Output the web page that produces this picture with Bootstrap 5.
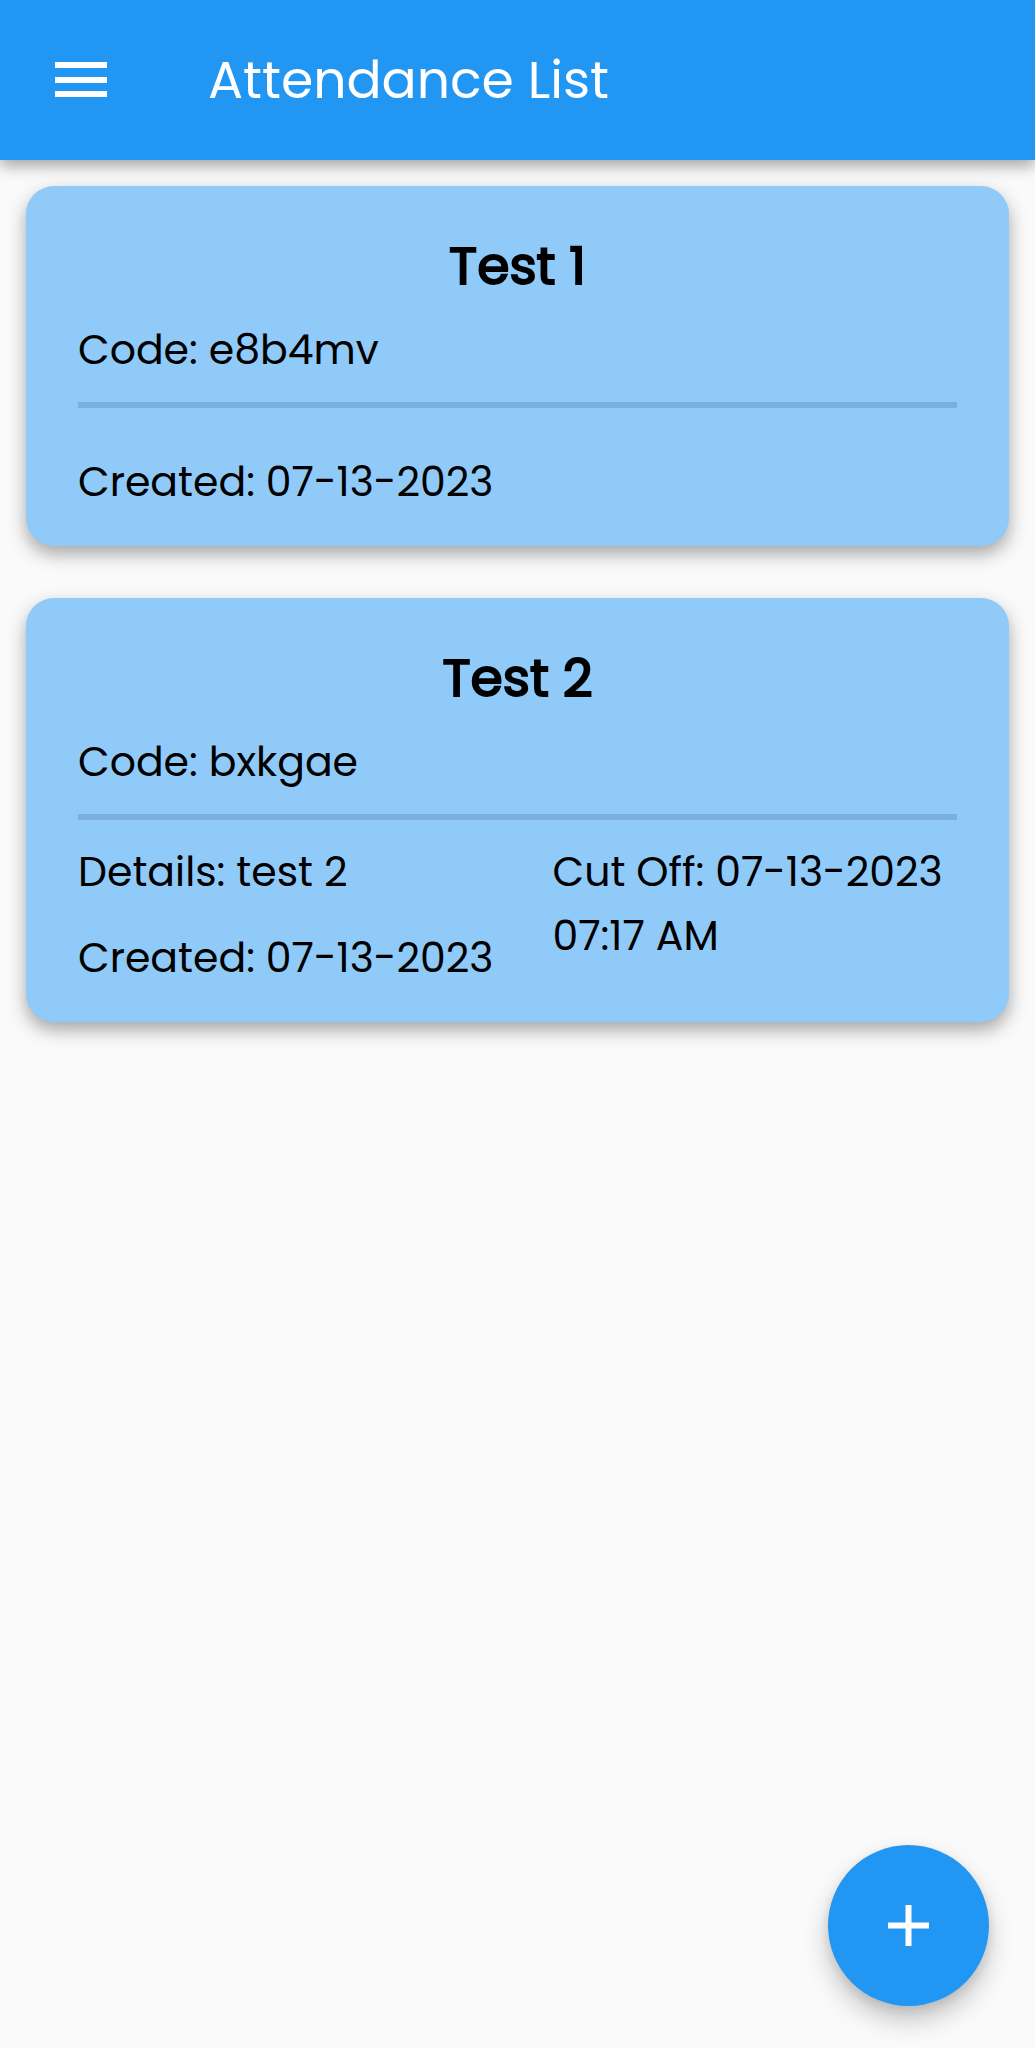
<!DOCTYPE html>
<html lang="en">
<head>
<meta charset="utf-8">
<meta name="viewport" content="width=device-width, initial-scale=1">
<title>Attendance List</title>
<link href="https://cdn.jsdelivr.net/npm/bootstrap@5.3.0/dist/css/bootstrap.min.css" rel="stylesheet">
<style>
  body { background: #fafafa; color: #000; font-family: Poppins, Inter, "Open Sans", sans-serif; font-size: 41px; line-height: 64px; }
  .app-bar { background: #2196f3; height: 160px; padding: 0 52px; gap: 98px; box-shadow: 0 6px 14px rgba(0,0,0,.34); }
  .app-title { font-size: 52px; line-height: 80px; color: #fff; }
  .icon-button { width: 58px; height: 58px; line-height: 0; color: #fff; }
  .session-list { padding: 26px; gap: 52px; }
  .session-card { background: #90caf9; border-radius: 28px; padding: 40px 52px 32px; box-shadow: 0 8px 18px rgba(0,0,0,.34); }
  .session-title { font-size: 52px; line-height: 80px; font-weight: 400; -webkit-text-stroke: 2px currentColor; margin-bottom: 12px; }
  .session-rule { height: 6px; margin: 20px 0; background: #7bafde; border: 0; opacity: 1; }
  .session-info { display: grid; grid-template-columns: 423fr 405fr; column-gap: 52px; }
  .info-stack { gap: 22px; }
  .fab { right: 46px; bottom: 42px; width: 161px; height: 161px; background: #2196f3; color: #fff; box-shadow: 0 14px 26px rgba(0,0,0,.22), 0 4px 12px rgba(0,0,0,.1); }
</style>
<script src="https://cdn.jsdelivr.net/npm/bootstrap@5.3.0/dist/js/bootstrap.bundle.min.js" defer></script>
</head>
<body>
<header class="app-bar d-flex align-items-center position-relative">
  <button type="button" class="icon-button btn p-0 border-0" aria-label="Open menu">
    <svg width="58" height="58" viewBox="0 0 58 58" fill="currentColor" aria-hidden="true"><path d="M3 11h52v6H3zM3 26h52v6H3zM3 40h52v6H3z"/></svg>
  </button>
  <h1 class="app-title fw-normal m-0">Attendance List</h1>
</header>
<main class="session-list d-flex flex-column">
  <article class="session-card">
    <h2 class="session-title text-center">Test 1</h2>
    <p class="m-0">Code: e8b4mv</p>
    <hr class="session-rule">
    <div class="session-info">
      <div class="info-stack d-flex flex-column">
        <div></div>
        <div class="text-nowrap">Created: 07-13-2023</div>
      </div>
    </div>
  </article>
  <article class="session-card">
    <h2 class="session-title text-center">Test 2</h2>
    <p class="m-0">Code: bxkgae</p>
    <hr class="session-rule">
    <div class="session-info">
      <div class="info-stack d-flex flex-column">
        <div>Details: test 2</div>
        <div class="text-nowrap">Created: 07-13-2023</div>
      </div>
      <div>Cut Off: 07-13-2023 07:17 AM</div>
    </div>
  </article>
</main>
<button type="button" class="fab btn rounded-circle border-0 p-0 position-fixed d-flex align-items-center justify-content-center" aria-label="Add attendance">
  <svg width="41" height="41" viewBox="0 0 41 41" fill="currentColor" aria-hidden="true"><path d="M17.5 0h6v17.5H41v6H23.5V41h-6V23.5H0v-6h17.5z"/></svg>
</button>
</body>
</html>
